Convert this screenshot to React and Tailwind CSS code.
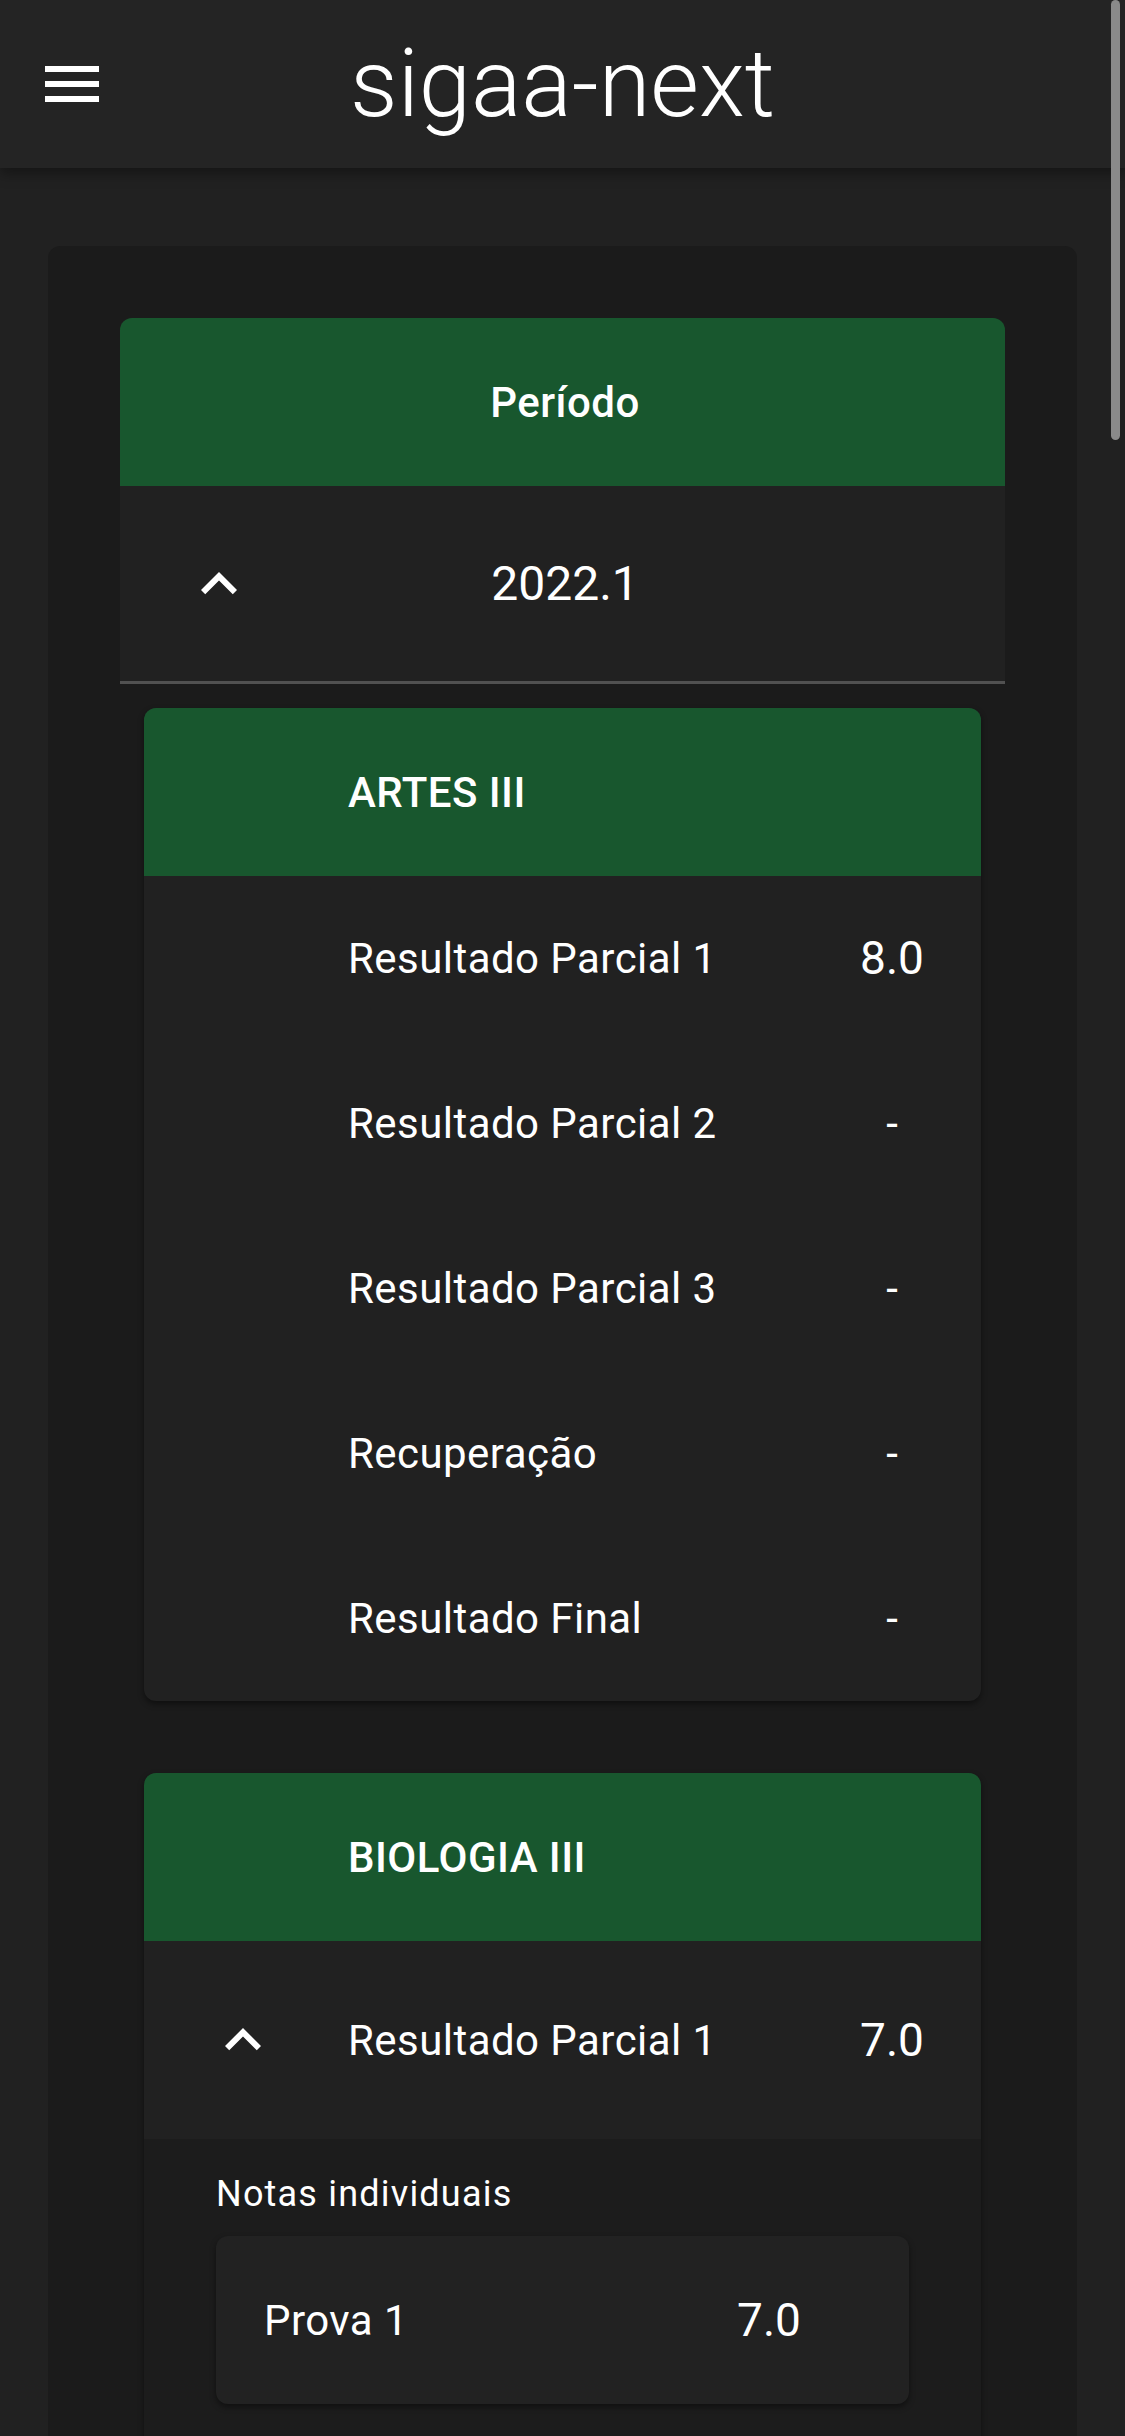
import React from 'react';

const ARTES = [
  { label: 'Resultado Parcial 1', value: '8.0' },
  { label: 'Resultado Parcial 2', value: '-' },
  { label: 'Resultado Parcial 3', value: '-' },
  { label: 'Recuperação', value: '-' },
  { label: 'Resultado Final', value: '-' },
];

function MenuIcon() {
  return (
    <svg viewBox="0 0 24 24" className="h-[72px] w-[72px] fill-white">
      <path d="M3 18h18v-2H3v2zm0-5h18v-2H3v2zm0-7v2h18V6H3z" />
    </svg>
  );
}

function ChevronUp() {
  return (
    <svg viewBox="0 0 24 24" className="h-[72px] w-[72px] fill-white">
      <path d="M7.41 15.41 12 10.83l4.59 4.58L18 14l-6-6-6 6z" />
    </svg>
  );
}

function CourseHeader({ name }) {
  return (
    <div className="grid h-[168px] grid-cols-[204px_1fr_178px] items-center bg-[#18572e]">
      <div />
      <span className="text-[42px] font-medium tracking-[0.45px]">{name}</span>
      <div />
    </div>
  );
}

function GradeRow({ label, value, expandable, tall }) {
  return (
    <div className={`grid grid-cols-[204px_1fr_178px] items-center ${tall ? 'h-[198px]' : 'h-[165px]'}`}>
      <div className="flex justify-center pr-[6px]">{expandable && <ChevronUp />}</div>
      <span className="text-[42px] tracking-[0.45px]">{label}</span>
      <span className={`text-center ${value === '-' ? 'text-[42px]' : 'text-[46px]'}`}>{value}</span>
    </div>
  );
}

export default function App() {
  return (
    <div className="relative h-[2436px] overflow-hidden bg-[#212121] font-['Roboto',sans-serif] text-white">
      {/* App bar */}
      <header className="relative z-10 grid h-[168px] grid-cols-[1fr_auto_1fr] items-center bg-[#242424] shadow-[0_6px_12px_rgba(0,0,0,0.35)]">
        <div className="pl-[36px]">
          <MenuIcon />
        </div>
        <h1 className="text-[94px] font-light leading-none">sigaa-next</h1>
        <div />
      </header>

      <main className="mx-[48px] mt-[78px] rounded-[12px] bg-[#1b1b1b] p-[72px]">
        <div className="overflow-hidden rounded-t-[12px]">
          {/* Period table head */}
          <div className="grid h-[168px] grid-cols-[198px_1fr_193px] items-center bg-[#18572e]">
            <div />
            <span className="text-center text-[42px] font-medium tracking-[0.45px]">Período</span>
            <div />
          </div>
          <div className="grid h-[198px] grid-cols-[198px_1fr_193px] items-center border-b-[3px] border-[#515151] bg-[#212121]">
            <div className="flex justify-center">
              <ChevronUp />
            </div>
            <span className="text-center text-[48px]">2022.1</span>
            <div />
          </div>

          <div className="flex flex-col gap-[72px] p-[24px]">
            {/* ARTES III */}
            <div className="overflow-hidden rounded-[12px] bg-[#212121] shadow-[0_3px_6px_rgba(0,0,0,0.45)]">
              <CourseHeader name="ARTES III" />
              {ARTES.map(row => (
                <GradeRow key={row.label} label={row.label} value={row.value} />
              ))}
            </div>

            {/* BIOLOGIA III */}
            <div className="overflow-hidden rounded-[12px] bg-[#212121] shadow-[0_3px_6px_rgba(0,0,0,0.45)]">
              <CourseHeader name="BIOLOGIA III" />
              <GradeRow label="Resultado Parcial 1" value="7.0" expandable tall />
              <div className="bg-[#1c1c1c] px-[72px] pb-[48px] pt-[25px]">
                <p className="text-[36px] leading-[60px] tracking-[1.2px]">Notas individuais</p>
                <div className="mt-[12px] grid h-[168px] grid-cols-[1fr_280px] items-center rounded-[12px] bg-[#222222] pl-[48px] shadow-[0_3px_6px_rgba(0,0,0,0.45)]">
                  <span className="text-[42px] tracking-[0.45px]">Prova 1</span>
                  <span className="text-center text-[46px]">7.0</span>
                </div>
              </div>
            </div>
          </div>
        </div>
      </main>

      {/* overlay scrollbar thumb */}
      <div className="absolute right-[5px] top-0 z-20 h-[440px] w-[9px] rounded-full bg-[#8a8a8a]" />
    </div>
  );
}
